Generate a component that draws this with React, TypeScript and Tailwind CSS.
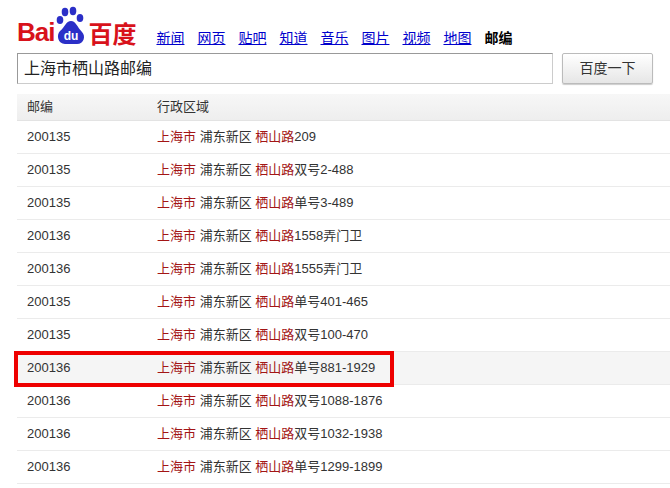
import React from "react";

const rows: [string, string, string][] = [
  ["200135", "", "209"],
  ["200135", "", "双号2-488"],
  ["200135", "", "单号3-489"],
  ["200136", "", "1558弄门卫"],
  ["200136", "", "1555弄门卫"],
  ["200135", "", "单号401-465"],
  ["200135", "", "双号100-470"],
  ["200136", "hl", "单号881-1929"],
  ["200136", "", "双号1088-1876"],
  ["200136", "", "双号1032-1938"],
  ["200136", "", "单号1299-1899"],
];

const nav = ["新闻", "网页", "贴吧", "知道", "音乐", "图片", "视频", "地图"];

export default function App() {
  return (
    <div
      className="w-[670px] h-[488px] bg-white overflow-hidden relative"
      style={{ fontFamily: '"Liberation Sans", Arial, "Noto Sans CJK SC", sans-serif' }}
    >
      <div className="flex items-end pl-[17px] pt-[6px] h-[46px]">
        <div className="flex items-end h-[40px]">
          <span className="text-[26px] font-bold text-[#d8121b] leading-none tracking-[-1px] mb-[1px]">Bai</span>
          <svg width="32" height="40" viewBox="0 0 30 40" className="mx-[1px]">
            <ellipse cx="9" cy="6" rx="3.3" ry="4.2" fill="#2b2fc7" />
            <ellipse cx="17" cy="5" rx="3.3" ry="4.2" fill="#2b2fc7" />
            <ellipse cx="4" cy="14" rx="3.3" ry="4" fill="#2b2fc7" />
            <ellipse cx="24" cy="12" rx="3.3" ry="4" fill="#2b2fc7" />
            <path d="M15 15 C10 15 9 21 4 25 C0 29 2 38 9 38 L21 38 C28 38 30 30 26 26 C21 21 20 15 15 15Z" fill="#2b2fc7" />
            <text x="15" y="34" textAnchor="middle" fontSize="12" fontWeight="bold" fill="#fff" fontFamily="Liberation Sans">du</text>
          </svg>
          <span className="text-[24px] font-bold text-[#d8121b] leading-none mb-[1px]" style={{ fontFamily: '"Noto Sans CJK SC", sans-serif' }}>百度</span>
        </div>
        <div className="flex gap-[13px] ml-[20px] mb-[1px] text-[14px] leading-none">
          {nav.map((n) => (
            <a key={n} className="text-[#00c] underline">{n}</a>
          ))}
          <span className="font-bold text-black">邮编</span>
        </div>
      </div>
      <div className="flex items-center pl-[17px] mt-[7px] gap-[9px]">
        <div className="w-[536px] h-[31px] border border-[#999] border-r-[#ccc] border-b-[#ccc] flex items-center pl-[6px] text-[16px] text-[#222]">
          上海市栖山路邮编
        </div>
        <div className="w-[91px] h-[31px] border border-[#bbb] rounded-[2px] bg-gradient-to-b from-white to-[#e6e6e6] flex items-center justify-center text-[14px] text-[#333] shadow-[0_1px_1px_rgba(0,0,0,0.2)]">
          百度一下
        </div>
      </div>
      <div className="ml-[17px] mt-[10px] w-[653px]">
        <div className="h-[27px] flex items-center bg-gradient-to-b from-[#f7f7f7] to-[#eeeeee] border-b border-[#e3e3e3] text-[13px] text-[#333]">
          <span className="w-[140px] pl-[10px]">邮编</span>
          <span>行政区域</span>
        </div>
        {rows.map(([code, hl, rest], i) => (
          <div
            key={i}
            className={`h-[33px] flex items-center border-b border-[#ebebeb] text-[13px] text-[#333] ${hl ? "bg-[#f5f5f5]" : ""}`}
          >
            <span className="w-[140px] pl-[10px]">{code}</span>
            <span>
              <span className="text-[#a31515]">上海市</span> 浦东新区 <span className="text-[#a31515]">栖山路</span>
              {rest}
            </span>
          </div>
        ))}
      </div>
      <div className="absolute left-[14px] top-[351px] w-[380px] h-[36px] border-[4px] border-[#e00]" />
    </div>
  );
}
